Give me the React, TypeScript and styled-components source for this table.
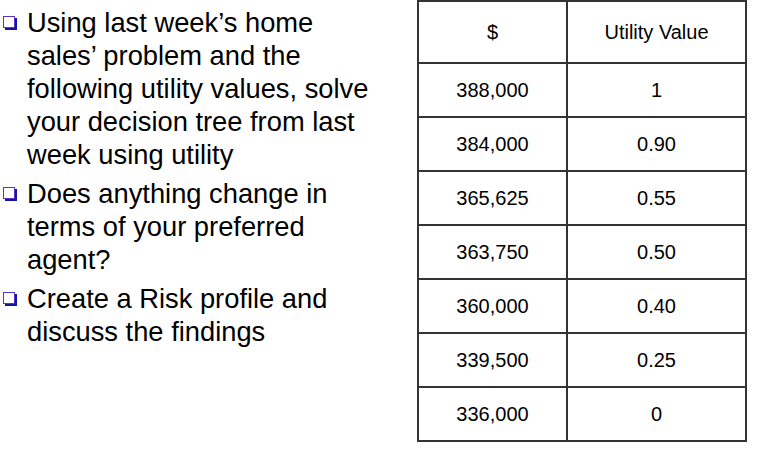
import styled, { createGlobalStyle } from "styled-components";

const GlobalStyle = createGlobalStyle`
  html, body {
    margin: 0;
    padding: 0;
    background: #fff;
  }
  body {
    font-family: "Liberation Sans", Arial, sans-serif;
    color: #000;
  }
`;

const bullets = [
  "Using last week\u2019s home sales\u2019 problem and the following utility values, solve your decision tree from last week using utility",
  "Does anything change in terms of your preferred agent?",
  "Create a Risk profile and discuss the findings",
];

const rows: [string, string][] = [
  ["388,000", "1"],
  ["384,000", "0.90"],
  ["365,625", "0.55"],
  ["363,750", "0.50"],
  ["360,000", "0.40"],
  ["339,500", "0.25"],
  ["336,000", "0"],
];

export default function App() {
  return (
    <>
      <GlobalStyle />
      <Slide>
        <BulletList>
          {bullets.map((b) => (
            <Item key={b}>
              <Box />
              <span>{b}</span>
            </Item>
          ))}
        </BulletList>
        <UtilityTable>
          <thead>
            <tr>
              <Head>$</Head>
              <Head>Utility Value</Head>
            </tr>
          </thead>
          <tbody>
            {rows.map(([amount, value]) => (
              <tr key={amount}>
                <Cell>{amount}</Cell>
                <Cell>{value}</Cell>
              </tr>
            ))}
          </tbody>
        </UtilityTable>
      </Slide>
    </>
  );
}

const Slide = styled.div`
  width: 777px;
  height: 459px;
  display: flex;
  align-items: flex-start;
`;

const BulletList = styled.ul`
  list-style: none;
  margin: 0;
  padding: 6px 0 0 3px;
  width: 383px;
  flex-shrink: 0;
  display: flex;
  flex-direction: column;
  gap: 6px;
  font-size: 27.3px;
  line-height: 33px;
`;

const Item = styled.li`
  display: flex;
  align-items: flex-start;
  gap: 12px;
`;

const Box = styled.i`
  flex-shrink: 0;
  width: 10px;
  height: 10px;
  margin-top: 10px;
  border: 1.5px solid #5a33c8;
  box-shadow: 2px 2px 0 #1414a6;
  background: #fff;
`;

const UtilityTable = styled.table`
  margin: 0 0 0 31px;
  border-collapse: collapse;
  width: 330px;
  font-size: 20px;

  th:first-child,
  td:first-child {
    width: 147px;
  }
`;

const Head = styled.th`
  height: 60px;
  padding: 0;
  font-weight: 400;
  text-align: center;
  vertical-align: middle;
  border: 2px solid #333;
`;

const Cell = styled.td`
  height: 52px;
  padding: 0;
  text-align: center;
  vertical-align: middle;
  border: 2px solid #333;
`;
